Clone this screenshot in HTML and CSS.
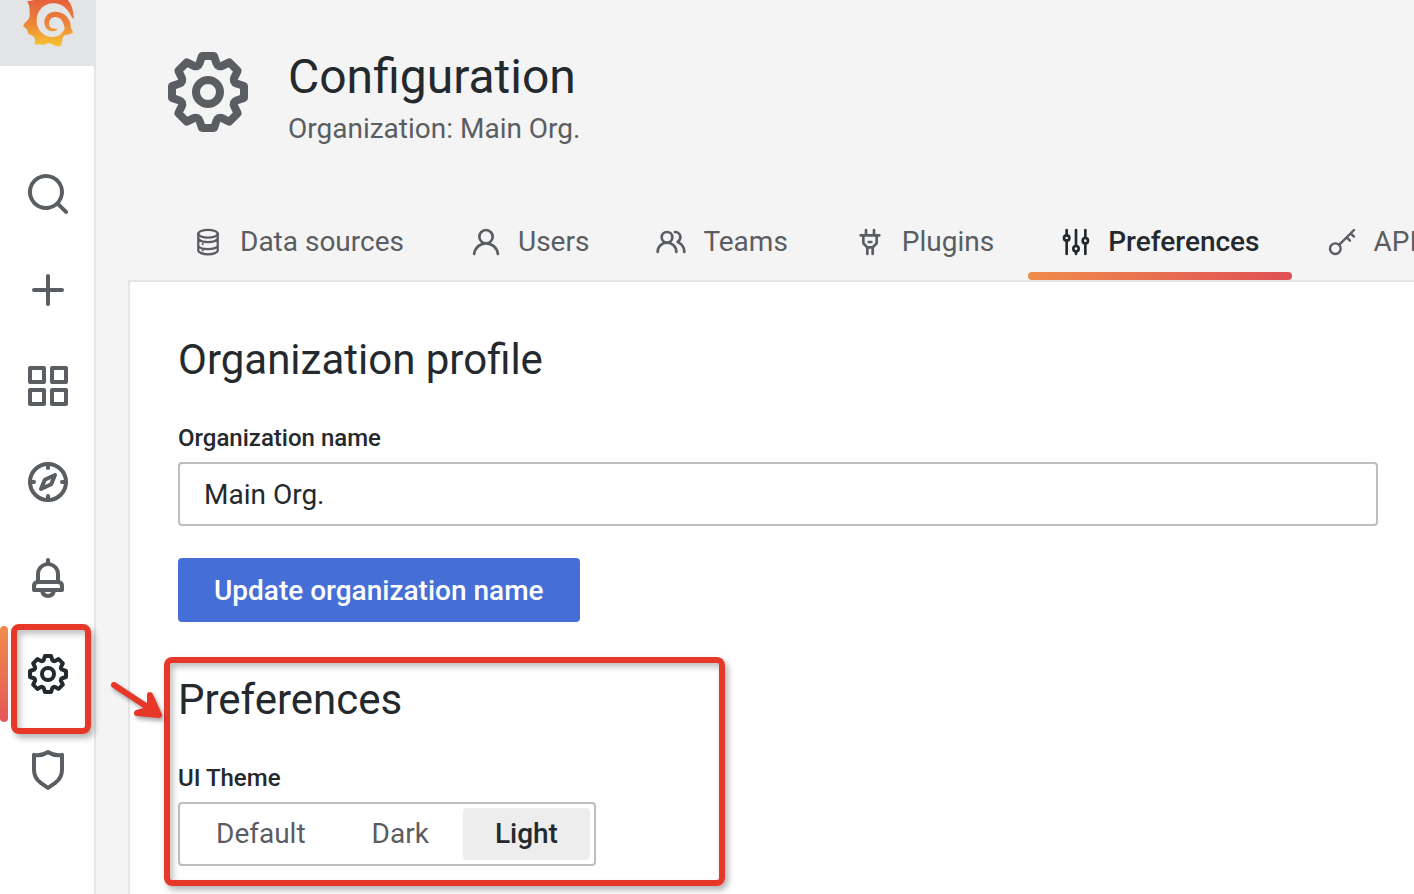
FILE: index.html
```html
<!DOCTYPE html>
<html lang="en">
<head>
<meta charset="utf-8">
<title>Configuration: Preferences</title>
<link rel="stylesheet" href="styles.css">
</head>
<body>
<div class="app">
  <aside class="sidebar">
    <a class="logo" href="#" aria-label="Home">
      <svg viewBox="0 0 288 198" width="96" height="66">
        <defs>
          <linearGradient id="sun" gradientUnits="userSpaceOnUse" x1="0" y1="0" x2="0" y2="140">
            <stop offset="0" stop-color="#e5613c"/>
            <stop offset=".5" stop-color="#ec8439"/>
            <stop offset="1" stop-color="#f8c632"/>
          </linearGradient>
        </defs>
        <path fill="url(#sun)" d="M82 3Q98 4 108 -4L200 -4Q219 15 222 55Q218 57 212 48L209 62Q210 76 213 84Q216 90 219 97Q214 104 196 105Q187 109 187 122Q187 132 182 137Q172 141 162 136Q152 129 142 130Q132 138 120 132L107 135Q103 130 105 120Q105 110 92 105Q83 103 83 94Q81 86 69 78Q72 68 82 62Q91 53 89 38Q90 18 82 3Z"/>
        <path fill="#e3e4e6" d="M218 58C207 30 189 10 159 10C130 10 110 34 110 62C110 91 132 111 158 111C180 111 194 96 195 76L209 65Z"/>
        <path fill="url(#sun)" d="M211 68C202 46 187 35 166 35C147 35 133 49 133 67C133 82 143 94 157 94C165 94 171 92 172 88C171 85 167 87 160 86C151 84 146 77 147 68C148 58 156 51 167 51C180 52 190 62 193 80L211 84Z"/>
      </svg>
    </a>
    <nav class="nav" aria-label="Main">
      <a class="nav-item" href="#" aria-label="Search"><svg class="icon-nav" viewBox="0 0 24 24"><path d="M21.71,20.29,18,16.61A9,9,0,1,0,16.61,18l3.68,3.68a1,1,0,0,0,1.42,0A1,1,0,0,0,21.71,20.29ZM11,18a7,7,0,1,1,7-7A7,7,0,0,1,11,18Z"/></svg></a>
      <a class="nav-item" href="#" aria-label="Create"><svg class="icon-nav" viewBox="0 0 24 24"><path d="M19,11H13V5a1,1,0,0,0-2,0v6H5a1,1,0,0,0,0,2h6v6a1,1,0,0,0,2,0V13h6a1,1,0,0,0,0-2Z"/></svg></a>
      <a class="nav-item" href="#" aria-label="Dashboards"><svg class="icon-nav" viewBox="0 0 24 24"><path d="M10,13H3a1,1,0,0,0-1,1v7a1,1,0,0,0,1,1h7a1,1,0,0,0,1-1V14A1,1,0,0,0,10,13ZM9,20H4V15H9ZM21,2H14a1,1,0,0,0-1,1v7a1,1,0,0,0,1,1h7a1,1,0,0,0,1-1V3A1,1,0,0,0,21,2ZM20,9H15V4h5Zm1,4H14a1,1,0,0,0-1,1v7a1,1,0,0,0,1,1h7a1,1,0,0,0,1-1V14A1,1,0,0,0,21,13Zm-1,7H15V15h5ZM10,2H3A1,1,0,0,0,2,3v7a1,1,0,0,0,1,1h7a1,1,0,0,0,1-1V3A1,1,0,0,0,10,2ZM9,9H4V4H9Z"/></svg></a>
      <a class="nav-item" href="#" aria-label="Explore"><svg class="icon-nav line" viewBox="0 0 24 24"><circle cx="12" cy="12" r="9"/><path d="M12 3v2M12 19v2M3 12h2M19 12h2M8.500 15.500L10.400 10.900L15.500 8.500L13.600 13.100Z"/></svg></a>
      <a class="nav-item" href="#" aria-label="Alerting"><svg class="icon-nav" viewBox="0 0 24 24"><path d="M18,13.18V10a6,6,0,0,0-5-5.91V3a1,1,0,0,0-2,0V4.09A6,6,0,0,0,6,10v3.18A3,3,0,0,0,4,16v2a1,1,0,0,0,1,1H8.14a4,4,0,0,0,7.72,0H19a1,1,0,0,0,1-1V16A3,3,0,0,0,18,13.18ZM8,10a4,4,0,0,1,8,0v3H8Zm4,10a2,2,0,0,1-1.72-1h3.44A2,2,0,0,1,12,20Zm6-3H6V16a1,1,0,0,1,1-1H17a1,1,0,0,1,1,1Z"/></svg></a>
      <a class="nav-item active" href="#" aria-label="Configuration"><svg class="icon-nav" viewBox="0 0 24 24"><path id="cog" d="M21.32,9.55l-1.89-.63.89-1.78A1,1,0,0,0,20.13,6L18,3.87a1,1,0,0,0-1.15-.19l-1.78.89-.63-1.89A1,1,0,0,0,13.5,2h-3a1,1,0,0,0-.95.68L8.92,4.57,7.14,3.68A1,1,0,0,0,6,3.87L3.87,6a1,1,0,0,0-.19,1.15l.89,1.78-1.89.63A1,1,0,0,0,2,10.5v3a1,1,0,0,0,.68.95l1.89.63-.89,1.78A1,1,0,0,0,3.87,18L6,20.13a1,1,0,0,0,1.15.19l1.78-.89.63,1.89a1,1,0,0,0,.95.68h3a1,1,0,0,0,.95-.68l.63-1.89,1.78.89A1,1,0,0,0,18,20.13L20.13,18a1,1,0,0,0,.19-1.15l-.89-1.78,1.89-.63A1,1,0,0,0,22,13.5v-3A1,1,0,0,0,21.32,9.55ZM20,12.78l-1.2.4A2,2,0,0,0,17.64,16l.57,1.14-1.1,1.1L16,17.64a2,2,0,0,0-2.79,1.16l-.4,1.2H11.22l-.4-1.2A2,2,0,0,0,8,17.64l-1.14.57-1.1-1.1L6.36,16A2,2,0,0,0,5.2,13.18L4,12.78V11.22l1.2-.4A2,2,0,0,0,6.36,8L5.79,6.89l1.1-1.1L8,6.36A2,2,0,0,0,10.82,5.2l.4-1.2h1.56l.4,1.2A2,2,0,0,0,16,6.36l1.14-.57,1.1,1.1L17.64,8a2,2,0,0,0,1.16,2.79l1.2.4ZM12,8a4,4,0,1,0,4,4A4,4,0,0,0,12,8Zm0,6a2,2,0,1,1,2-2A2,2,0,0,1,12,14Z"/></svg><span class="marker marker-nav"></span></a>
      <a class="nav-item" href="#" aria-label="Server admin"><svg class="icon-nav" viewBox="0 0 24 24"><path d="M19.63,3.65a1,1,0,0,0-.84-.2,8,8,0,0,1-6.22-1.27,1,1,0,0,0-1.14,0A8,8,0,0,1,5.21,3.45a1,1,0,0,0-.84.2A1,1,0,0,0,4,4.43v7.45a9,9,0,0,0,3.77,7.33l3.65,2.6a1,1,0,0,0,1.16,0l3.65-2.6A9,9,0,0,0,20,11.88V4.43A1,1,0,0,0,19.63,3.65ZM18,11.88a7,7,0,0,1-2.93,5.7L12,19.77,8.93,17.58A7,7,0,0,1,6,11.88V5.58a10,10,0,0,0,6-1.39,10,10,0,0,0,6,1.39Z"/></svg></a>
    </nav>
  </aside>

  <main class="main">
    <header class="page-header">
      <svg class="icon-page" viewBox="0 0 24 24" aria-hidden="true"><use href="#cog"/></svg>
      <div>
        <h1 class="title">Configuration</h1>
        <p class="subtitle">Organization: Main Org.</p>
      </div>
    </header>

    <nav class="tabs" aria-label="Configuration sections">
      <a class="tab" href="#"><svg class="icon-tab line" viewBox="0 0 24 24"><g stroke-width="1.700"><ellipse cx="12" cy="5.800" rx="7.300" ry="2.900"/><path d="M4.700 5.800v12.400c0 1.700 3.200 3 7.300 3s7.300-1.300 7.300-3v-12.400M4.700 9.500c1 1.700 4 2.600 7.300 2.600s6.300-.9 7.300-2.600M4.700 15c1 1.700 4 2.300 7.300 2.300s6.300-.9 7.300-2.300"/></g><path stroke-width="1.600" d="M8 13.600v.01M8 18.300v.01"/></svg>Data sources</a>
      <a class="tab" href="#"><svg class="icon-tab" viewBox="0 0 24 24"><path d="M15.71,12.71a6,6,0,1,0-7.42,0,10,10,0,0,0-6.22,8.18,1,1,0,0,0,2,.22,8,8,0,0,1,15.9,0,1,1,0,0,0,1,.89h.11a1,1,0,0,0,.88-1.1A10,10,0,0,0,15.71,12.71ZM12,12a4,4,0,1,1,4-4A4,4,0,0,1,12,12Z"/></svg>Users</a>
      <a class="tab" href="#"><svg class="icon-tab" viewBox="0 0 24 24"><path d="M12.3,12.22A4.92,4.92,0,0,0,14,8.5a5,5,0,0,0-10,0,4.92,4.92,0,0,0,1.7,3.72A8,8,0,0,0,1,19.5a1,1,0,0,0,2,0,6,6,0,0,1,12,0,1,1,0,0,0,2,0A8,8,0,0,0,12.3,12.22ZM9,11.5a3,3,0,1,1,3-3A3,3,0,0,1,9,11.5Zm9.74.32A5,5,0,0,0,15,3.5a1,1,0,0,0,0,2,3,3,0,0,1,3,3,3,3,0,0,1-1.5,2.59,1,1,0,0,0-.5.84,1,1,0,0,0,.45.86l.39.26.13.07a7,7,0,0,1,4,6.38,1,1,0,0,0,2,0A9,9,0,0,0,18.74,11.82Z"/></svg>Teams</a>
      <a class="tab" href="#"><svg class="icon-tab" viewBox="0 0 24 24"><path d="M19,6H16V3a1,1,0,0,0-2,0V6H10V3A1,1,0,0,0,8,3V6H5A1,1,0,0,0,5,8H6v5a1,1,0,0,0,.29.71L9,16.41V21a1,1,0,0,0,2,0V17h2v4a1,1,0,0,0,2,0V16.41l2.71-2.7A1,1,0,0,0,18,13V8h1a1,1,0,0,0,0-2Zm-3,6.59L13.59,15H10.41L8,12.59V8h8ZM11,13h2a1,1,0,0,0,0-2H11a1,1,0,0,0,0,2Z"/></svg>Plugins</a>
      <a class="tab active" href="#" aria-current="page"><svg class="icon-tab line" viewBox="0 0 24 24"><path d="M5 3v4M5 11v10M12 3v12M12 19v2M19 3v6M19 13v8"/><circle cx="5" cy="9" r="2"/><circle cx="12" cy="17" r="2"/><circle cx="19" cy="11" r="2"/></svg>Preferences</a>
      <a class="tab" href="#"><svg class="icon-tab line" viewBox="0 0 24 24"><g stroke-width="1.800"><circle cx="7" cy="17" r="4"/><path d="M10 14L21 3M18.500 5.500L21 8M15.500 8.500L18 11"/></g></svg>API keys</a>
    </nav>

    <div class="panel">
      <form class="section">
        <h2 class="heading">Organization profile</h2>
        <label class="label" for="org-name">Organization name</label>
        <input class="input" id="org-name" type="text" value="Main Org.">
        <button class="button" type="button">Update organization name</button>
      </form>
      <section class="section">
        <h2 class="heading">Preferences</h2>
        <fieldset class="field">
          <legend class="label">UI Theme</legend>
          <div class="radio-group">
            <input class="radio" type="radio" name="theme" id="theme-default"><label class="option" for="theme-default">Default</label>
            <input class="radio" type="radio" name="theme" id="theme-dark"><label class="option" for="theme-dark">Dark</label>
            <input class="radio" type="radio" name="theme" id="theme-light" checked><label class="option" for="theme-light">Light</label>
          </div>
        </fieldset>
        <span class="marker marker-section"></span>
        <svg class="arrow" viewBox="0 0 60 50" aria-hidden="true"><path d="M6 9L44 34"/><path class="arrow-tip" d="M42 19L51 39L29 37L42 33.500Z"/></svg>
      </section>
    </div>
  </main>
</div>
</body>
</html>
```
FILE: styles.css
```css
* {
  box-sizing: border-box;
}

body {
  margin: 0;
  background: #f4f4f4;
  color: #24292e;
  font-family: Roboto, "Liberation Sans", sans-serif;
  font-size: 28px;
  line-height: 44px;
}

h1, h2, p {
  margin: 0;
  font-weight: 400;
}

a {
  color: inherit;
  text-decoration: none;
}

svg {
  display: block;
  flex: none;
  fill: currentColor;
}

.line {
  fill: none;
  stroke: currentColor;
  stroke-width: 2;
  stroke-linecap: round;
  stroke-linejoin: round;
}

.app {
  display: flex;
  height: 100vh;
  overflow: hidden;
}

/* Sidebar */

.sidebar {
  flex: none;
  width: 96px;
  background: #fff;
  border-right: 2px solid #e4e5e6;
  color: #5a5d61;
}

.logo {
  display: block;
  width: 96px;
  background: #e3e4e6;
}

.nav {
  padding-top: 80px;
}

.nav-item {
  position: relative;
  display: flex;
  align-items: center;
  height: 96px;
  padding-left: 24px;
}

.nav-item.active {
  color: #24292e;
}

.nav-item.active::before {
  content: "";
  position: absolute;
  left: 0;
  top: 0;
  width: 8px;
  height: 96px;
  border-radius: 4px;
  background: linear-gradient(#f08c4a, #e5575a);
}

.icon-nav {
  width: 48px;
  height: 48px;
}

/* Header and tabs */

.main {
  flex: 1;
  min-width: 0;
  padding-left: 32px;
}

.page-header {
  display: flex;
  gap: 32px;
  padding: 44px 32px 0;
  color: #5a5d61;
}

.icon-page {
  width: 96px;
  height: 96px;
}

.title {
  color: #24292e;
  font-size: 48px;
  line-height: 66px;
}

.subtitle {
  line-height: 38px;
}

.tabs {
  display: flex;
  gap: 2px;
  margin-top: 56px;
  padding-left: 32px;
  overflow: hidden;
  color: #5a5d61;
}

.tab {
  position: relative;
  display: flex;
  flex: none;
  align-items: center;
  gap: 16px;
  height: 76px;
  padding: 0 32px;
  line-height: 46px;
  white-space: nowrap;
}

.tab.active {
  color: #24292e;
  font-weight: 500;
}

.tab.active::after {
  content: "";
  position: absolute;
  left: 0;
  right: 0;
  bottom: 0;
  height: 8px;
  border-radius: 4px;
  background: linear-gradient(90deg, #f08c4a, #e04f55);
}

.icon-tab {
  width: 32px;
  height: 32px;
}

/* Panel */

.panel {
  display: flex;
  flex-direction: column;
  gap: 52px;
  min-height: 100vh;
  padding: 52px 36px 0 48px;
  border: solid #e4e5e6;
  border-width: 2px 0 0 2px;
  background: #fff;
}

.section {
  position: relative;
}

.heading {
  margin-bottom: 34px;
  font-size: 42px;
  line-height: 52px;
}

.label {
  display: block;
  margin-bottom: 6px;
  padding: 0;
  font-size: 24px;
  font-weight: 500;
  line-height: 36px;
}

.input {
  display: block;
  width: 100%;
  height: 64px;
  margin-bottom: 32px;
  padding: 0 24px;
  border: 2px solid #bdbebe;
  border-radius: 4px;
  background: #fff;
  color: inherit;
  font: inherit;
}

.button {
  display: block;
  height: 64px;
  padding: 2px 36px 0;
  border: 0;
  border-radius: 4px;
  background: #456fd6;
  color: #fff;
  font: inherit;
  font-weight: 500;
}

.field {
  margin: 0;
  padding: 0;
  border: 0;
}

.radio-group {
  position: relative;
  display: inline-flex;
  gap: 2px;
  height: 64px;
  padding: 4px;
  border: 2px solid #bdbebe;
  border-radius: 4px;
  background: #fff;
}

.radio {
  position: absolute;
  opacity: 0;
}

.option {
  padding: 0 32px;
  border-radius: 4px;
  color: #5a5d61;
  line-height: 52px;
}

.radio:checked + .option {
  background: #ededee;
  color: #24292e;
  font-weight: 500;
}

/* Red callouts over the page */

.marker {
  position: absolute;
  border: 6px solid #e73728;
  border-radius: 8px;
  box-shadow: 3px 4px 6px rgba(0, 0, 0, .3), inset 3px 4px 6px rgba(0, 0, 0, .25);
  pointer-events: none;
}

.marker-nav {
  left: 11px;
  top: -2px;
  width: 80px;
  height: 110px;
}

.marker-section {
  left: -14px;
  top: -17px;
  width: 561px;
  height: 229px;
}

.arrow {
  position: absolute;
  left: -70px;
  top: 2px;
  width: 60px;
  height: 50px;
  overflow: visible;
  fill: none;
  stroke: #e73728;
  stroke-width: 6;
  stroke-linecap: round;
  stroke-linejoin: round;
  filter: drop-shadow(2px 3px 2px rgba(0, 0, 0, .35));
}

.arrow-tip {
  fill: #e73728;
}
```
